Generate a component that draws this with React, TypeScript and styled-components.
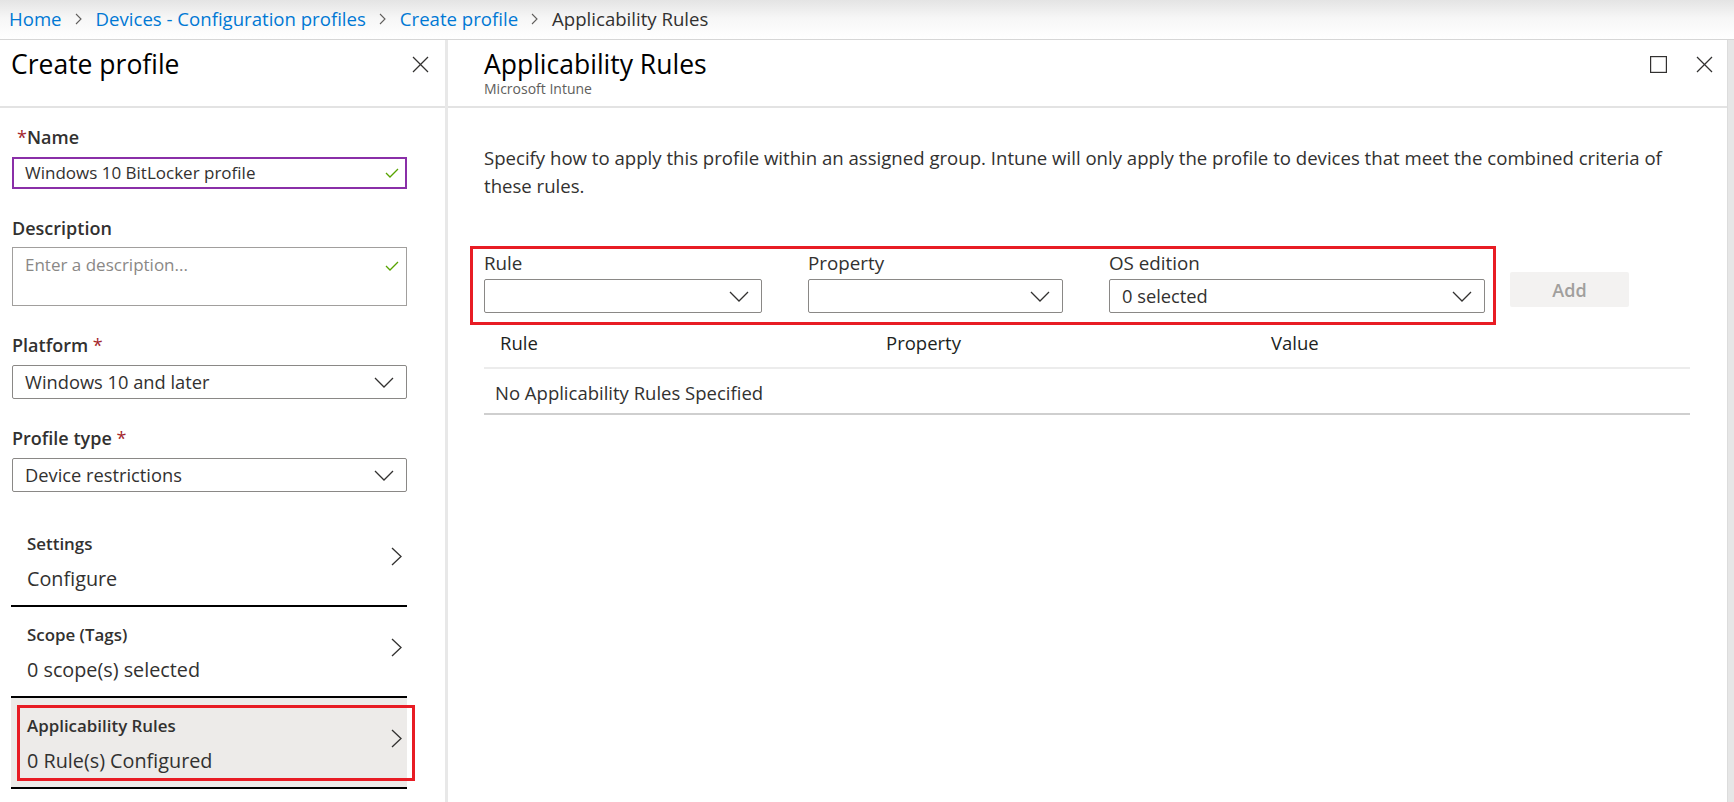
import React from "react";
import styled, { createGlobalStyle } from "styled-components";

const GlobalStyle = createGlobalStyle`
  * { box-sizing: border-box; }
  html, body { margin: 0; padding: 0; background: #ffffff; }
  body {
    font-family: "Open Sans", "Noto Sans", sans-serif;
    color: #323130;
    width: 1734px;
    height: 802px;
    overflow: hidden;
  }
`;

const Page = styled.div`
  display: flex;
  flex-direction: column;
  width: 1734px;
  height: 802px;
`;

const Breadcrumb = styled.nav`
  height: 40px;
  flex: none;
  display: flex;
  align-items: center;
  padding: 0 0 1px 9px;
  background: linear-gradient(to bottom, #e4e4e4 0%, #f6f6f6 45%, #ffffff 100%);
  border-bottom: 1px solid #d6d6d6;
  font-size: 18.6px;
  line-height: 24px;
`;

const Crumb = styled.span<{ $current?: boolean }>`
  color: ${(p) => (p.$current ? "#323130" : "#0078d4")};
  white-space: nowrap;
`;

const CrumbSep = styled.span`
  display: inline-flex;
  margin: 0 14px 0 13px;
`;

const Main = styled.div`
  flex: 1;
  display: flex;
  min-height: 0;
`;

const LeftBlade = styled.section`
  width: 448px;
  flex: none;
  border-right: 3px solid #e8e8e8;
  display: flex;
  flex-direction: column;
`;

const RightBlade = styled.section`
  flex: 1;
  display: flex;
  flex-direction: column;
  min-width: 0;
`;

const ScrollStrip = styled.div`
  width: 7px;
  flex: none;
  background: #e6e6e6;
  border-left: 1px solid #dcdcdc;
`;

const BladeHeader = styled.header<{ $left?: number }>`
  height: 68px;
  flex: none;
  display: flex;
  justify-content: space-between;
  align-items: flex-start;
  padding: 8px 0 0 ${(p) => p.$left ?? 11}px;
  border-bottom: 2px solid #e3e3e3;
`;

const TitleBlock = styled.div`
  display: flex;
  flex-direction: column;
`;

const Title = styled.h1`
  margin: 0;
  font-size: 26.5px;
  font-weight: 400;
  line-height: 32px;
  color: #000000;
  white-space: nowrap;
`;

const Subtitle = styled.div`
  font-size: 14px;
  line-height: 18px;
  color: #605e5c;
`;

const HeaderActions = styled.div<{ $right: number }>`
  display: flex;
  align-items: center;
  gap: 29px;
  margin-top: 8px;
  padding-right: ${(p) => p.$right}px;
`;

const IconButton = styled.span`
  display: inline-flex;
  width: 17px;
  height: 17px;
  align-items: center;
  justify-content: center;
`;

const Form = styled.div`
  display: flex;
  flex-direction: column;
  padding: 17px 38px 0 12px;
`;

const Field = styled.div<{ $gap?: number }>`
  display: flex;
  flex-direction: column;
  gap: ${(p) => p.$gap ?? 8}px;
  & + & {
    margin-top: 27px;
  }
`;

const Label = styled.label<{ $indent?: number }>`
  font-size: 18px;
  font-weight: 600;
  line-height: 24px;
  color: #323130;
  padding-left: ${(p) => p.$indent ?? 0}px;
`;

const Req = styled.span`
  color: #a4262c;
  font-weight: 400;
`;

const TextBox = styled.div<{ $focused?: boolean; $tall?: boolean }>`
  height: ${(p) => (p.$tall ? 59 : 32)}px;
  display: flex;
  align-items: ${(p) => (p.$tall ? "flex-start" : "center")};
  justify-content: space-between;
  border: ${(p) => (p.$focused ? "2px solid #8a2fa8" : "1px solid #a19f9d")};
  padding: ${(p) => (p.$tall ? "5px 7px 0 12px" : "0 6px 0 11px")};
  font-size: 17px;
  line-height: 24px;
`;

const Placeholder = styled.span`
  color: #8a8886;
`;

const CheckWrap = styled.span<{ $top?: number }>`
  display: inline-flex;
  margin-top: ${(p) => p.$top ?? 0}px;
`;

const Select = styled.div<{ $h?: number }>`
  height: ${(p) => p.$h ?? 34}px;
  display: flex;
  align-items: center;
  justify-content: space-between;
  border: 1px solid #8a8886;
  border-radius: 2px;
  padding: 0 12px 0 12px;
  font-size: 18.3px;
  line-height: 24px;
  color: #323130;
`;

const NavList = styled.div`
  display: flex;
  flex-direction: column;
  margin: 24px 0 0 -1px;
`;

const NavRow = styled.div<{ $active?: boolean }>`
  position: relative;
  height: 91px;
  display: flex;
  align-items: center;
  justify-content: space-between;
  padding: 0 5px 8px 16px;
  border-bottom: 2px solid #000000;
  background: ${(p) => (p.$active ? "#edebe9" : "transparent")};
`;

const NavText = styled.div`
  align-self: flex-start;
  padding-top: 17px;
  display: flex;
  flex-direction: column;
`;

const NavLabel = styled.span`
  font-size: 16.9px;
  font-weight: 600;
  line-height: 22px;
  color: #323130;
`;

const NavValue = styled.span`
  margin-top: 12px;
  font-size: 19.8px;
  line-height: 24px;
  color: #323130;
`;

const Highlight = styled.div`
  position: absolute;
  left: 6px;
  right: -8px;
  top: 7px;
  bottom: 6px;
  border: 3px solid #e81c24;
  pointer-events: none;
`;

const RightBody = styled.div`
  padding: 36px 37px 0 36px;
  display: flex;
  flex-direction: column;
`;

const Intro = styled.p`
  margin: 0;
  font-size: 18.6px;
  line-height: 28px;
  color: #323130;
  white-space: nowrap;
`;

const FilterRow = styled.div`
  display: flex;
  align-items: flex-start;
  gap: 14px;
  margin: 46px 0 0 -14px;
`;

const FilterBox = styled.div`
  display: grid;
  grid-template-columns: 278px 255px 376px;
  column-gap: 46px;
  border: 3px solid #e81c24;
  padding: 2px 8px 9px 11px;
`;

const FilterField = styled.div`
  display: flex;
  flex-direction: column;
  gap: 4px;
`;

const FilterLabel = styled.span`
  font-size: 18.8px;
  line-height: 24px;
  color: #323130;
`;

const AddButton = styled.button`
  margin-top: 26px;
  width: 119px;
  height: 35px;
  border: none;
  border-radius: 2px;
  background: #f3f2f1;
  color: #a19f9d;
  font-family: inherit;
  font-size: 18px;
  font-weight: 600;
  padding: 0;
`;

const Table = styled.div`
  width: 1206px;
  display: flex;
  flex-direction: column;
`;

const HeadRow = styled.div`
  display: grid;
  grid-template-columns: 386px 386px 1fr;
  padding-top: 6px;
  height: 44px;
  border-bottom: 2px solid #ececec;
`;

const HeadCell = styled.span<{ $pad?: number }>`
  padding-left: ${(p) => p.$pad ?? 16}px;
  font-size: 18.5px;
  line-height: 24px;
  color: #201f1e;
`;

const BodyRow = styled.div`
  height: 46px;
  padding: 12px 0 0 11px;
  border-bottom: 2px solid #cfcfcf;
  font-size: 18.5px;
  line-height: 24px;
  color: #323130;
`;

const ChevronDown = () => (
  <svg width="20" height="11" viewBox="0 0 20 11" fill="none">
    <polyline points="1,1 10,10 19,1" stroke="#323130" strokeWidth="1.3" />
  </svg>
);

const ChevronRight = () => (
  <svg width="11" height="19" viewBox="0 0 11 19" fill="none">
    <polyline points="1,1 10,9.5 1,18" stroke="#323130" strokeWidth="1.3" />
  </svg>
);

const CloseIcon = () => (
  <svg width="17" height="17" viewBox="0 0 17 17" fill="none">
    <line x1="1" y1="1" x2="16" y2="16" stroke="#323130" strokeWidth="1.3" />
    <line x1="16" y1="1" x2="1" y2="16" stroke="#323130" strokeWidth="1.3" />
  </svg>
);

const MaxIcon = () => (
  <svg width="17" height="17" viewBox="0 0 17 17" fill="none">
    <rect x="0.6" y="0.6" width="15.8" height="15.8" stroke="#323130" strokeWidth="1.2" />
  </svg>
);

const Check = () => (
  <svg width="14" height="10" viewBox="0 0 14 10" fill="none">
    <polyline points="1,5 5,9 13,1" stroke="#57a300" strokeWidth="1.3" />
  </svg>
);

const Sep = () => (
  <svg width="7" height="12" viewBox="0 0 7 12" fill="none">
    <polyline points="1,1 6,6 1,11" stroke="#605e5c" strokeWidth="1.1" />
  </svg>
);

export default function App() {
  return (
    <>
      <GlobalStyle />
      <Page>
        <Breadcrumb>
          <Crumb>Home</Crumb>
          <CrumbSep><Sep /></CrumbSep>
          <Crumb>Devices - Configuration profiles</Crumb>
          <CrumbSep><Sep /></CrumbSep>
          <Crumb>Create profile</Crumb>
          <CrumbSep><Sep /></CrumbSep>
          <Crumb $current>Applicability Rules</Crumb>
        </Breadcrumb>
        <Main>
          <LeftBlade>
            <BladeHeader $left={11}>
              <Title>Create profile</Title>
              <HeaderActions $right={16}>
                <IconButton><CloseIcon /></IconButton>
              </HeaderActions>
            </BladeHeader>
            <Form>
              <Field>
                <Label $indent={5}><Req>*</Req>Name</Label>
                <TextBox $focused>
                  <span>Windows 10 BitLocker profile</span>
                  <CheckWrap><Check /></CheckWrap>
                </TextBox>
              </Field>
              <Field $gap={7}>
                <Label>Description</Label>
                <TextBox $tall>
                  <Placeholder>Enter a description...</Placeholder>
                  <CheckWrap $top={8}><Check /></CheckWrap>
                </TextBox>
              </Field>
              <Field>
                <Label>Platform <Req>*</Req></Label>
                <Select>
                  <span>Windows 10 and later</span>
                  <ChevronDown />
                </Select>
              </Field>
              <Field>
                <Label>Profile type <Req>*</Req></Label>
                <Select>
                  <span>Device restrictions</span>
                  <ChevronDown />
                </Select>
              </Field>
              <NavList>
                <NavRow>
                  <NavText>
                    <NavLabel>Settings</NavLabel>
                    <NavValue>Configure</NavValue>
                  </NavText>
                  <ChevronRight />
                </NavRow>
                <NavRow>
                  <NavText>
                    <NavLabel>Scope (Tags)</NavLabel>
                    <NavValue>0 scope(s) selected</NavValue>
                  </NavText>
                  <ChevronRight />
                </NavRow>
                <NavRow $active>
                  <NavText>
                    <NavLabel>Applicability Rules</NavLabel>
                    <NavValue>0 Rule(s) Configured</NavValue>
                  </NavText>
                  <ChevronRight />
                  <Highlight />
                </NavRow>
              </NavList>
            </Form>
          </LeftBlade>
          <RightBlade>
            <BladeHeader $left={36}>
              <TitleBlock>
                <Title>Applicability Rules</Title>
                <Subtitle>Microsoft Intune</Subtitle>
              </TitleBlock>
              <HeaderActions $right={14}>
                <IconButton><MaxIcon /></IconButton>
                <IconButton><CloseIcon /></IconButton>
              </HeaderActions>
            </BladeHeader>
            <RightBody>
              <Intro>
                Specify how to apply this profile within an assigned group. Intune will only apply the profile to devices that meet the combined criteria of
                <br />
                these rules.
              </Intro>
              <FilterRow>
                <FilterBox>
                  <FilterField>
                    <FilterLabel>Rule</FilterLabel>
                    <Select>
                      <span />
                      <ChevronDown />
                    </Select>
                  </FilterField>
                  <FilterField>
                    <FilterLabel>Property</FilterLabel>
                    <Select>
                      <span />
                      <ChevronDown />
                    </Select>
                  </FilterField>
                  <FilterField>
                    <FilterLabel>OS edition</FilterLabel>
                    <Select>
                      <span>0 selected</span>
                      <ChevronDown />
                    </Select>
                  </FilterField>
                </FilterBox>
                <AddButton>Add</AddButton>
              </FilterRow>
              <Table>
                <HeadRow>
                  <HeadCell>Rule</HeadCell>
                  <HeadCell>Property</HeadCell>
                  <HeadCell $pad={15}>Value</HeadCell>
                </HeadRow>
                <BodyRow>No Applicability Rules Specified</BodyRow>
              </Table>
            </RightBody>
          </RightBlade>
          <ScrollStrip />
        </Main>
      </Page>
    </>
  );
}
